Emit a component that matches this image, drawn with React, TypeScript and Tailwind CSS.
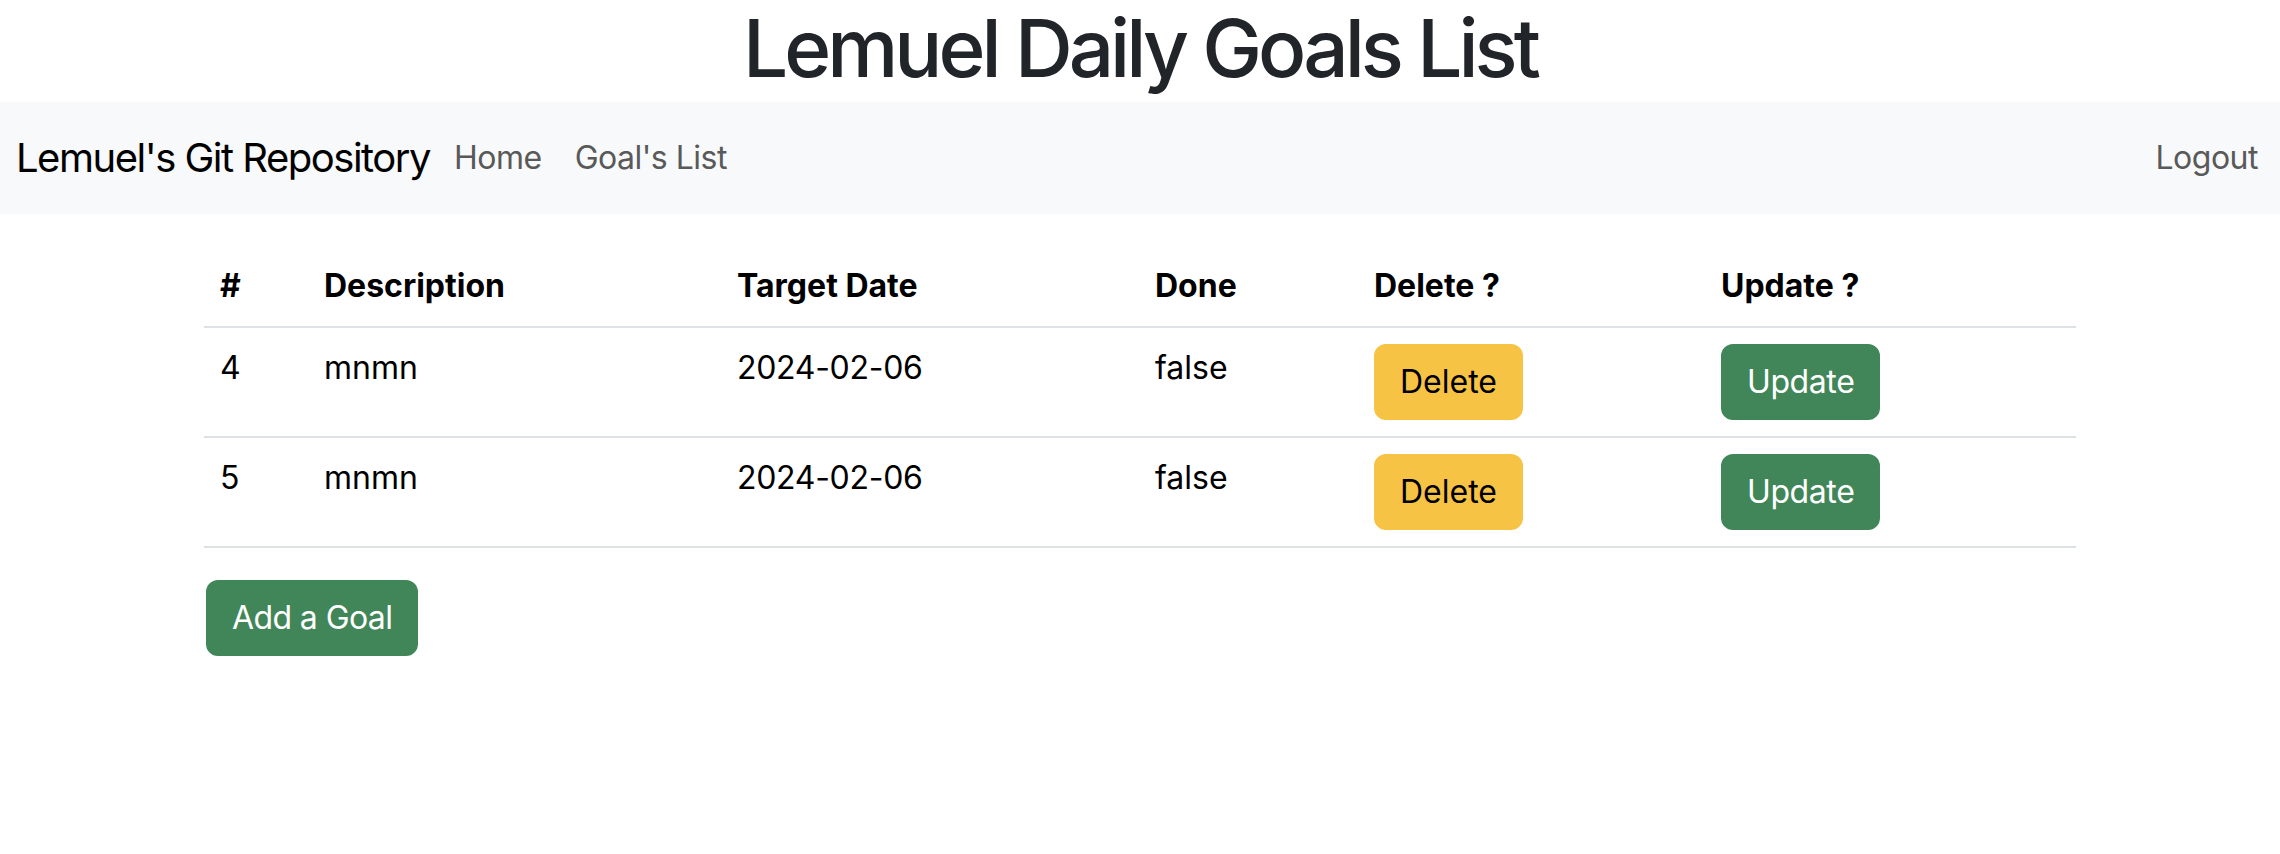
import React from 'react'

const goals = [
  { id: 4, description: 'mnmn', targetDate: '2024-02-06', done: false },
  { id: 5, description: 'mnmn', targetDate: '2024-02-06', done: false }
]

const App: React.FC = () => {
  return (
    <div className="min-h-screen bg-white text-[#212529] font-['Inter','Noto_Sans',sans-serif]">
      <h1 className="text-center text-[80px] leading-[96px] font-medium tracking-[-4px] mb-[6px]">
        Lemuel Daily Goals List
      </h1>

      <nav className="h-[112px] bg-[#f8f9fa] flex items-center px-[16px]">
        <span className="text-[40px] text-black tracking-[-1.5px] mr-[24px]">Lemuel's Git Repository</span>
        <div className="flex items-center gap-[33px] text-[32px] text-[#595959] tracking-[-0.5px]">
          <a href="#">Home</a>
          <a href="#">Goal's List</a>
        </div>
        <a href="#" className="ml-auto text-[32px] text-[#595959] tracking-[-0.5px] pr-[6px]">
          Logout
        </a>
      </nav>

      <div className="w-[1920px] mx-auto px-[24px] pt-[32px]">
        <table className="w-full table-fixed border-collapse text-[32px] leading-[48px] text-black">
          <colgroup>
            <col className="w-[104px]" />
            <col className="w-[413px]" />
            <col className="w-[418px]" />
            <col className="w-[219px]" />
            <col className="w-[347px]" />
            <col />
          </colgroup>
          <thead>
            <tr className="border-b-2 border-[#dee2e6] text-left">
              <th className="p-[16px] font-bold">#</th>
              <th className="p-[16px] font-bold">Description</th>
              <th className="p-[16px] font-bold">Target Date</th>
              <th className="p-[16px] font-bold">Done</th>
              <th className="p-[16px] font-bold">Delete ?</th>
              <th className="p-[16px] font-bold">Update ?</th>
            </tr>
          </thead>
          <tbody>
            {goals.map((goal) => (
              <tr key={goal.id} className="border-b-2 border-[#dee2e6] align-top">
                <td className="p-[16px]">{goal.id}</td>
                <td className="p-[16px]">{goal.description}</td>
                <td className="p-[16px] tracking-[-0.3px]">{goal.targetDate}</td>
                <td className="p-[16px]">{goal.done.toString()}</td>
                <td className="p-[16px]">
                  <button className="bg-[#f6c344] border-2 border-[#f6c344] text-black rounded-[12px] px-[24px] py-[12px] leading-[48px]">
                    Delete
                  </button>
                </td>
                <td className="p-[16px]">
                  <button className="bg-[#418659] border-2 border-[#418659] text-white rounded-[12px] px-[24px] py-[12px] leading-[48px] tracking-[-0.4px]">
                    Update
                  </button>
                </td>
              </tr>
            ))}
          </tbody>
        </table>

        <button className="mt-[32px] ml-[2px] bg-[#418659] border-2 border-[#418659] text-white rounded-[12px] px-[24px] py-[12px] text-[32px] leading-[48px] tracking-[-0.6px]">
          Add a Goal
        </button>
      </div>
    </div>
  )
}

export default App
